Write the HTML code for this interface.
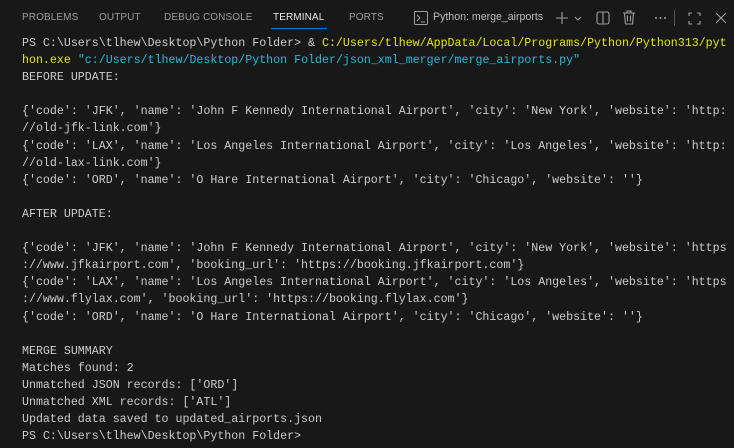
<!DOCTYPE html><html><head><style>
body{margin:0;width:734px;height:448px;background:#181818;overflow:hidden;position:relative;font-family:"Liberation Sans",sans-serif}
.tab{position:absolute;top:12px;font-size:10px;color:#9d9d9d;letter-spacing:0.1px}
.term{position:absolute;left:22px;top:35px;font-family:"Liberation Mono",monospace;font-size:11.63px;line-height:17.09px;color:#cccccc;white-space:pre}
.y{color:#e5e510}.b{color:#29b8db}
svg{position:absolute}
</style></head><body>
<div class="tab" style="left:22px">PROBLEMS</div>
<div class="tab" style="left:99px">OUTPUT</div>
<div class="tab" style="left:164px">DEBUG CONSOLE</div>
<div class="tab" style="left:273px;color:#e7e7e7">TERMINAL</div>
<div style="position:absolute;left:271px;top:28px;width:56px;height:1px;background:#0078d4"></div>
<div class="tab" style="left:349px">PORTS</div>
<svg style="left:414px;top:11px" width="14" height="14" viewBox="0 0 14 14" fill="none" stroke="#a0a0a0" stroke-width="1"><rect x="0.5" y="0.5" width="13" height="13" rx="1"/><path d="M3 4l3 3-3 3M7 11h4"/></svg>
<div class="tab" style="left:433px;top:11px;font-size:10.6px;color:#bdbdbd;letter-spacing:0">Python: merge_airports</div>
<svg style="left:555px;top:11px" width="30" height="14" fill="none" stroke="#a0a0a0" stroke-width="1.1"><path d="M7 1v12M1 7h12M20 6l3 3 3-3"/></svg>
<svg style="left:596px;top:11px" width="14" height="14" fill="none" stroke="#a0a0a0" stroke-width="1.1"><rect x="1" y="1" width="12" height="12" rx="2"/><path d="M7 1v12"/></svg>
<svg style="left:622px;top:10px" width="14" height="15" fill="none" stroke="#a0a0a0" stroke-width="1.1"><path d="M1 3h12M5 3V1h4v2M2.5 3l1 11h7l1-11M5.5 5.5v6M8.5 5.5v6"/></svg>
<svg style="left:654px;top:16px" width="13" height="4" fill="#a0a0a0"><circle cx="2" cy="2" r="1"/><circle cx="6.5" cy="2" r="1"/><circle cx="11" cy="2" r="1"/></svg>
<div style="position:absolute;left:674px;top:10px;width:1px;height:16px;background:#555"></div>
<svg style="left:688px;top:12px" width="13" height="13" fill="none" stroke="#a0a0a0" stroke-width="1.1"><path d="M1 4V1h3M9 1h3v3M12 9v3H9M4 12H1V9"/></svg>
<svg style="left:715px;top:12px" width="12" height="12" fill="none" stroke="#a0a0a0" stroke-width="1.1"><path d="M1 1l10 10M11 1L1 11"/></svg>
<div class="term">PS C:\Users\tlhew\Desktop\Python Folder&gt; &amp; <span class="y">C:/Users/tlhew/AppData/Local/Programs/Python/Python313/pyt
hon.exe</span> <span class="b">"c:/Users/tlhew/Desktop/Python Folder/json_xml_merger/merge_airports.py"</span>
BEFORE UPDATE:

{'code': 'JFK', 'name': 'John F Kennedy International Airport', 'city': 'New York', 'website': 'http:
//old-jfk-link.com'}
{'code': 'LAX', 'name': 'Los Angeles International Airport', 'city': 'Los Angeles', 'website': 'http:
//old-lax-link.com'}
{'code': 'ORD', 'name': 'O Hare International Airport', 'city': 'Chicago', 'website': ''}

AFTER UPDATE:

{'code': 'JFK', 'name': 'John F Kennedy International Airport', 'city': 'New York', 'website': 'https
://www.jfkairport.com', 'booking_url': 'https://booking.jfkairport.com'}
{'code': 'LAX', 'name': 'Los Angeles International Airport', 'city': 'Los Angeles', 'website': 'https
://www.flylax.com', 'booking_url': 'https://booking.flylax.com'}
{'code': 'ORD', 'name': 'O Hare International Airport', 'city': 'Chicago', 'website': ''}

MERGE SUMMARY
Matches found: 2
Unmatched JSON records: ['ORD']
Unmatched XML records: ['ATL']
Updated data saved to updated_airports.json
PS C:\Users\tlhew\Desktop\Python Folder&gt;</div>
</body></html>
